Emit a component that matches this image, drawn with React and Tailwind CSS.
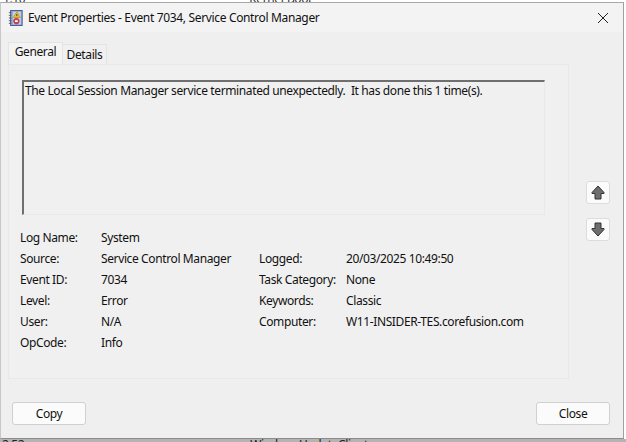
const rowsLeft = [
  ["Log Name:", "System"],
  ["Source:", "Service Control Manager"],
  ["Event ID:", "7034"],
  ["Level:", "Error"],
  ["User:", "N/A"],
  ["OpCode:", "Info"],
];

const rowsRight = [
  ["Logged:", "20/03/2025 10:49:50"],
  ["Task Category:", "None"],
  ["Keywords:", "Classic"],
  ["Computer:", "W11-INSIDER-TES.corefusion.com"],
];

function Field({ label, value, labelWidth }) {
  return (
    <div className="flex h-[21px] items-center">
      <span className={labelWidth}>{label}</span>
      <span className="whitespace-nowrap">{value}</span>
    </div>
  );
}

function LogIcon() {
  return (
    <svg width="15" height="16" viewBox="0 0 16 18">
      <rect x="2.5" y="0.5" width="13" height="17" fill="#8fa9d6" stroke="#3f5585" />
      <rect x="5" y="2" width="9" height="14" fill="#c3d2ec" />
      <path d="M0.5 3h3M0.5 6h3M0.5 9h3M0.5 12h3M0.5 15h3" stroke="#555" strokeWidth="1" />
      <path d="M9.5 2 L13.5 8.5 L5.5 8.5 Z" fill="#f2c316" stroke="#a87d10" strokeWidth="0.6" />
      <rect x="9" y="4.5" width="1" height="2.4" fill="#333" />
      <circle cx="9" cy="12.5" r="3.2" fill="#d8455a" stroke="#9c2436" strokeWidth="0.6" />
      <rect x="7.5" y="11.5" width="3" height="2" fill="#fff" />
    </svg>
  );
}

function ArrowButton({ up }) {
  return (
    <button className="flex h-[23px] w-[24px] items-center justify-center rounded-[3px] border border-[#dcdcdc] bg-[#fbfbfb]">
      <svg width="14" height="15" viewBox="0 0 14 15">
        <path
          d={up ? "M7 1 L13 7.5 V8.5 H10 V14 H4 V8.5 H1 V7.5 Z" : "M7 14 L13 7.5 V6.5 H10 V1 H4 V6.5 H1 V7.5 Z"}
          fill="#6e6e6e"
          stroke="#333"
          strokeWidth="1"
        />
      </svg>
    </button>
  );
}

export default function App() {
  return (
    <div className="flex h-[442px] w-[626px] flex-col overflow-hidden bg-white font-['Noto_Sans',sans-serif] text-[12px] leading-none tracking-[-0.38px] text-[#111]">
      {/* list behind the dialog, only its edges show */}
      <div className="flex h-[2px] items-end overflow-hidden text-[#333]">
        <span className="-mb-[3px] ml-[3px] whitespace-nowrap">1:10</span>
        <span className="-mb-[3px] ml-[224px] whitespace-nowrap">Kernel-Boot</span>
      </div>

      <div className="flex h-[437px] w-[624px] shrink-0 flex-col border border-t-[#a8a8a8] border-r-[#a0a0a0] border-b-[#8c8c8c] border-l-[#c8c8c8] bg-[#efefef]">
        {/* title bar */}
        <div className="flex h-[29px] shrink-0 items-center bg-[#f3f3f3] pl-[7px] pr-[14px]">
          <LogIcon />
          <span className="ml-[5px] tracking-[-0.34px]">Event Properties - Event 7034, Service Control Manager</span>
          <svg className="ml-auto" width="12" height="12" viewBox="0 0 12 12">
            <path d="M1 1 L11 11 M11 1 L1 11" stroke="#222" strokeWidth="1" />
          </svg>
        </div>

        {/* tabs */}
        <div className="mt-[10px] flex h-[22px] items-end pl-[7px]">
          <div className="z-10 flex h-[22px] w-[55px] items-center justify-center border border-b-0 border-[#e4e4e4] bg-[#f4f4f4] pb-[3px]">General</div>
          <div className="flex h-[20px] w-[44px] items-center justify-center border border-b-0 border-l-0 border-[#e4e4e4] bg-[#f0f0f0]">Details</div>
        </div>

        {/* tab panel and arrows */}
        <div className="flex items-start">
          <div className="ml-[7px] h-[315px] w-[561px] shrink-0 border border-[#e8e8e8] bg-[#f0f0f0] pl-[11px] pt-[15px]">
            <div className="ml-[2px] h-[135px] w-[523px] border border-[#e8e8e8] border-t-2 border-l-2 border-t-[#6f6f6f] border-l-[#6f6f6f] bg-[#f0f0f0] pl-[1px] pt-[2px]">
              <div className="flex h-[14px] items-center whitespace-pre">The Local Session Manager service terminated unexpectedly.  It has done this 1 time(s).</div>
            </div>

            <div className="mt-[12px] flex">
              <div className="w-[239px] shrink-0">
                {rowsLeft.map(([label, value]) => (
                  <Field key={label} label={label} value={value} labelWidth="w-[81px]" />
                ))}
              </div>
              <div className="pt-[21px]">
                {rowsRight.map(([label, value]) => (
                  <Field key={label} label={label} value={value} labelWidth="w-[87px]" />
                ))}
              </div>
            </div>
          </div>

          <div className="ml-[17px] mt-[117px] flex flex-col gap-[14px]">
            <ArrowButton up />
            <ArrowButton />
          </div>
        </div>

        {/* footer */}
        <div className="mt-[23px] flex justify-between pl-[11px] pr-[13px]">
          <button className="h-[23px] w-[74px] rounded-[3px] border border-[#d0d0d0] bg-[#fbfbfb]">Copy</button>
          <button className="h-[23px] w-[74px] rounded-[3px] border border-[#d0d0d0] bg-[#fbfbfb]">Close</button>
        </div>
      </div>

      <div className="flex h-[3px] items-start overflow-hidden bg-[#b4b4b4] text-[#222]">
        <span className="ml-[2px] whitespace-nowrap">2:52</span>
        <span className="ml-[226px] whitespace-nowrap">WindowsUpdateClient</span>
      </div>
    </div>
  );
}
